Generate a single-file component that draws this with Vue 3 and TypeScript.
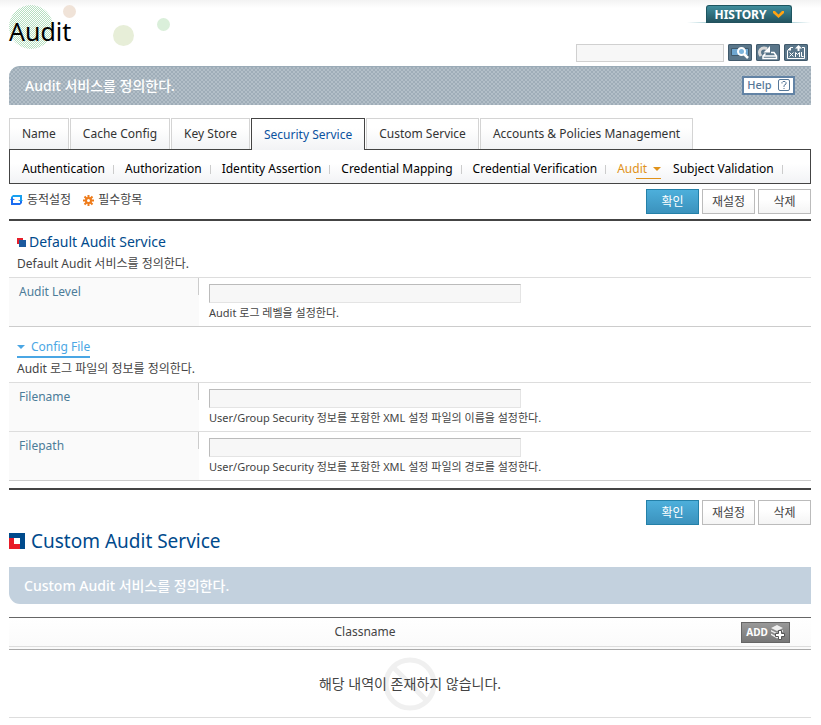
<script setup lang="ts">
import { ref } from 'vue'

interface Field { id: string; label: string; hint: string }

const tabs: string[] = ['Name', 'Cache Config', 'Key Store', 'Security Service', 'Custom Service', 'Accounts & Policies Management']
const activeTab = ref('Security Service')
const subTabs: string[] = ['Authentication', 'Authorization', 'Identity Assertion', 'Credential Mapping', 'Credential Verification', 'Audit', 'Subject Validation']
const activeSub = ref('Audit')

const levelFields: Field[] = [
  { id: 'audit-level', label: 'Audit Level', hint: 'Audit 로그 레벨을 설정한다.' },
]
const fileFields: Field[] = [
  { id: 'filename', label: 'Filename', hint: 'User/Group Security 정보를 포함한 XML 설정 파일의 이름을 설정한다.' },
  { id: 'filepath', label: 'Filepath', hint: 'User/Group Security 정보를 포함한 XML 설정 파일의 경로를 설정한다.' },
]
const values = ref<Record<string, string>>({ 'audit-level': '', filename: '', filepath: '' })
const query = ref('')
const actions: string[] = ['확인', '재설정', '삭제']
</script>

<template>
  <div class="page">
    <header class="top">
      <div class="title-area">
        <svg class="bubbles" width="180" height="52" viewBox="0 0 180 52" aria-hidden="true">
          <defs>
            <pattern id="dots" width="2" height="2" patternUnits="userSpaceOnUse">
              <rect width="1" height="1" fill="#b5dfc0" />
              <rect x="1" y="1" width="1" height="1" fill="#b5dfc0" />
            </pattern>
          </defs>
          <circle cx="22" cy="27" r="22" fill="url(#dots)" />
          <circle cx="60.500" cy="11.500" r="6.500" fill="#f0e3d8" />
          <circle cx="114.500" cy="35.500" r="10.500" fill="#e7eed8" />
          <circle cx="154.500" cy="24.500" r="6.500" fill="#daefda" />
        </svg>
        <h1>Audit</h1>
      </div>
      <div class="tools">
        <div class="history-bar">
          <button class="history" type="button">HISTORY
            <svg width="11" height="7" viewBox="0 0 11 7" aria-hidden="true"><path d="M0 0h2l3.500 3.500L9 0h2v2L5.500 7 0 2z" fill="#ffa312" /></svg>
          </button>
        </div>
        <form class="search" @submit.prevent>
          <input v-model="query" type="text" aria-label="Search">
          <button type="submit" class="tool search-button" aria-label="Search">
            <svg width="24" height="17" viewBox="0 0 24 17">
              <path d="M3.500 4.500h17v7h-17z" fill="#6ea6d0" stroke="#40596b" />
              <circle cx="13.500" cy="7.500" r="3.500" fill="#7db5dd" stroke="#fff" stroke-width="2" />
              <path d="M16 10l4 4" stroke="#fff" stroke-width="2.500" />
            </svg>
          </button>
          <button type="button" class="tool" aria-label="Reload">
            <svg width="24" height="17" viewBox="0 0 24 17" fill="none" stroke="#fff">
              <path d="M5 12C1.500 7 5 2.500 11 4.500" stroke="#d8d8d8" stroke-width="3" />
              <path d="M14 2v6.500H7.500z" fill="#fff" stroke="none" />
              <path d="M9.500 9.500L7 12v2.500h13.500V12L18 8.500h-3M7 12h13" stroke-width="1.500" />
            </svg>
          </button>
          <button type="button" class="tool" aria-label="Export XML">
            <svg width="24" height="17" viewBox="0 0 24 17" fill="none" stroke="#fff">
              <path d="M9 3.500H6.500L3.500 6.500v8h17v-11H18" />
              <path d="M4 6.500L7 3v3.500z" fill="#fff" stroke="none" />
              <path d="M14.500 3v4" stroke-width="2" />
              <path d="M11 4.500L14.500 1 18 4.500z" fill="#fff" stroke="none" />
              <path d="M5.500 8.500l4 4M9.500 8.500l-4 4M11.500 13V8.500l2 2 2-2V13M17.500 8v4.500h2" />
            </svg>
          </button>
        </form>
      </div>
    </header>

    <div class="banner">
      <p>Audit 서비스를 정의한다.</p>
      <button type="button" class="help">Help
        <svg width="12" height="12" viewBox="0 0 12 12" fill="none" stroke="#567797"><rect x=".5" y=".5" width="11" height="11" rx="1.500" /><path d="M4 4.500V3.500L5 2.500h2l1 1V5L6 6.500V8M6 9v1" /></svg>
      </button>
    </div>

    <nav class="tabs">
      <button v-for="t in tabs" :key="t" type="button" :class="{ active: t === activeTab }" @click="activeTab = t">{{ t }}</button>
    </nav>
    <nav class="subtabs">
      <a v-for="s in subTabs" :key="s" href="#" :class="{ active: s === activeSub }" @click.prevent="activeSub = s">{{ s }}</a>
    </nav>

    <div class="legend-row">
      <ul class="legend">
        <li>
          <svg width="13" height="12" viewBox="0 0 13 12"><path d="M1 5V3l2-2h9v5h1l-2 2-3-2h2V3H3v2z" fill="#18a0f0" /><path d="M12 7v2l-2 2H1V6H0l2-2 3 2H3v3h7V7z" fill="#1b6cf0" /></svg>
          동적설정
        </li>
        <li>
          <svg width="11" height="11" viewBox="0 0 11 11" fill="none" stroke="#ee7c1c" stroke-width="2"><circle cx="5.500" cy="5.500" r="2.500" /><path d="M5.500 0v3M5.500 8v3M0 5.500h3M8 5.500h3M1.500 1.500l2 2M7.500 7.500l2 2M1.500 9.500l2-2M7.500 3.500l2-2" /></svg>
          필수항목
        </li>
      </ul>
      <div class="actions"><button v-for="a in actions" :key="a" type="button">{{ a }}</button></div>
    </div>

    <main class="form">
      <section>
        <h2>
          <svg width="9" height="9" viewBox="0 0 9 9" aria-hidden="true"><path d="M0 0h6v6H0z" fill="#e61e2a" /><path d="M2 2h7v7H2z" fill="#1b5a9e" /></svg>
          Default Audit Service
        </h2>
        <p class="desc">Default Audit 서비스를 정의한다.</p>
        <div v-for="f in levelFields" :key="f.id" class="row">
          <label :for="f.id">{{ f.label }}</label>
          <div class="value">
            <input :id="f.id" v-model="values[f.id]" type="text">
            <p>{{ f.hint }}</p>
          </div>
        </div>
      </section>
      <section>
        <h3><a href="#" @click.prevent>Config File</a></h3>
        <p class="desc">Audit 로그 파일의 정보를 정의한다.</p>
        <div v-for="f in fileFields" :key="f.id" class="row">
          <label :for="f.id">{{ f.label }}</label>
          <div class="value">
            <input :id="f.id" v-model="values[f.id]" type="text">
            <p>{{ f.hint }}</p>
          </div>
        </div>
      </section>
    </main>
    <div class="actions bottom"><button v-for="a in actions" :key="a" type="button">{{ a }}</button></div>

    <h2 class="custom-title">
      <svg width="16" height="16" viewBox="0 0 16 16" aria-hidden="true"><path d="M0 0h16v16H0z" fill="#e81c28" /><path d="M0 0h16v16h-5V5H0z" fill="#004a8c" /><path d="M5 5h6v6H5z" fill="#fff" /></svg>
      Custom Audit Service
    </h2>
    <div class="custom-banner">Custom Audit 서비스를 정의한다.</div>
    <table>
      <thead>
        <tr>
          <th scope="col">Classname</th>
          <td class="add-cell">
            <button type="button" class="add">ADD
              <svg width="15" height="15" viewBox="0 0 15 15" aria-hidden="true"><path d="M7 0l6 3-6 3-6-3zM1 5l6 3 6-3v1.500L7 9.500 1 6.500zM1 8.500l6 3 2-1v2l-2 1-6-3.500z" fill="#eee" /><path d="M8.500 5.500h3v3h3v3h-3v3h-3v-3h-3v-3h3z" fill="#fff" stroke="#555" /></svg>
            </button>
          </td>
        </tr>
      </thead>
      <tbody>
        <tr>
          <td colspan="2" class="empty">
            <div class="empty-box">
              <svg width="54" height="54" viewBox="0 0 54 54" fill="none" stroke="#f0f0f0" stroke-width="5" aria-hidden="true"><circle cx="27" cy="27" r="24" /><path d="M10 10l34 34" /></svg>
              <span>해당 내역이 존재하지 않습니다.</span>
            </div>
          </td>
        </tr>
      </tbody>
    </table>
  </div>
</template>

<style>
body { margin: 0; background: #fff; }
</style>

<style scoped>
.page {
  padding: 0 10px 7px 9px;
  background: linear-gradient(#f3f3f3, #fff 8px);
  color: #444;
  font: 12px/18px "Noto Sans", "Noto Sans CJK KR", sans-serif;
}
.page *, .page *::before, .page *::after { box-sizing: border-box; }
h1, h2, h3, p, ul { margin: 0; padding: 0; }
button, input { font: inherit; margin: 0; }
button { display: flex; align-items: center; justify-content: center; padding: 0; cursor: pointer; }
a { color: inherit; text-decoration: none; }
svg { flex: none; }

.top { display: flex; justify-content: space-between; height: 66px; }
.title-area { display: grid; }
.title-area > * { grid-area: 1 / 1; }
h1 { padding-top: 13px; font-size: 25px; line-height: 36px; font-weight: 400; color: #000; }
.tools { display: flex; flex-direction: column; align-items: flex-end; padding-top: 5px; }
.history-bar {
  display: flex;
  justify-content: center;
  width: 124px;
  background: linear-gradient(90deg, #fff, #9cc8d0 20%, #9cc8d0 80%, #fff) bottom / 100% 1px no-repeat;
}
.history {
  gap: 6px;
  width: 86px;
  height: 18px;
  border: 1px solid #1d5560;
  border-width: 1px 1px 0;
  border-radius: 3px 3px 0 0;
  background: linear-gradient(#3f8d9c, #21505c);
  color: #fff;
  font-size: 12px;
  font-weight: 700;
}
.search { display: flex; gap: 4px; margin: 21px 3px 0 0; }
.search input { width: 148px; height: 18px; border: 1px solid #d0d0d0; background: #f7f7f7; }
.tool { width: 24px; height: 17px; border: 0; border-radius: 2px; background: #5a768a; box-shadow: inset 0 0 0 1px #40596b; }

.banner {
  display: flex;
  align-items: center;
  justify-content: space-between;
  height: 39px;
  padding: 0 16px;
  border-top: 1px solid #9aabb7;
  border-radius: 11px 0 0;
  background: repeating-conic-gradient(#9fadb8 0 25%, #b3bfc8 0 50%) 0 0 / 4px 4px;
  color: #fff;
  font-size: 14px;
  font-weight: 500;
}
.help { gap: 6px; width: 53px; height: 19px; margin-bottom: 2px; border: 2px solid #6283a5; background: #fff; color: #567797; font-size: 11px; }

.tabs { display: flex; gap: 1px; margin: 13px 0 -1px; }
.tabs button {
  position: relative;
  height: 31px;
  padding: 0 12px;
  border: 1px solid #d4d4d4;
  border-bottom: 0;
  background: linear-gradient(#fff 30%, #f2f3f5);
  color: #333;
  white-space: nowrap;
}
.tabs button.active { height: 32px; border-color: #444; color: #0b52a0; }
.subtabs {
  display: flex;
  align-items: center;
  height: 35px;
  padding: 5px 12px 0;
  border: 1px solid #444;
  background: linear-gradient(#fff 40%, #f2f3f5);
  color: #000;
  line-height: 20px;
}
.subtabs a { display: flex; align-items: center; white-space: nowrap; }
.subtabs a::after { content: ""; width: 1px; height: 9px; margin: 0 11px 0 8px; background: #ccc; }
.subtabs a.active { color: #e0921a; background: linear-gradient(#e0921a, #e0921a) 19px 100% / 25px 1px no-repeat; }
.subtabs a.active::after { width: 0; height: 0; margin: 0 12px 0 6px; border: 4px solid transparent; border-top-color: #e0921a; border-bottom: 0; background: none; }

.legend-row { display: flex; justify-content: space-between; align-items: flex-start; padding: 5px 0; }
.legend { display: flex; gap: 12px; padding-left: 1px; list-style: none; line-height: 22px; }
.legend li { display: flex; align-items: center; gap: 4px; }
.actions { display: flex; justify-content: flex-end; gap: 3px; }
.actions button { width: 53px; height: 25px; border: 1px solid #bbb; background: linear-gradient(#fff 40%, #f4f4f4); color: #444; }
.actions button:first-child { border-color: #2480a8; background: linear-gradient(#4dafdb, #3b92bd); color: #fff; }
.bottom { margin-top: 10px; }

.form { padding-bottom: 7px; border-top: 2px solid #444; border-bottom: 2px solid #444; }
.form h2 { display: flex; align-items: center; gap: 3px; padding: 11px 8px 1px; font-size: 14px; line-height: 20px; font-weight: 400; color: #004a8c; }
.desc { padding: 1px 8px 3px; line-height: 20px; }
.form h3 { display: flex; padding: 11px 8px 0; font-size: 12px; line-height: 18px; font-weight: 400; color: #4aa6e4; }
.form h3 a { display: flex; align-items: center; gap: 6px; border-bottom: 2px solid #4aa6e4; }
.form h3 a::before { content: ""; border: 4px solid transparent; border-top-color: #4aa6e4; border-bottom: 0; }
.row { display: grid; grid-template-columns: 190px 1fr; height: 49px; border-top: 1px solid #ddd; }
section .row:last-child { height: 50px; border-bottom: 1px solid #ccc; }
.row label { padding: 5px 10px; background: linear-gradient(#ccc, #ccc) 100% 0 / 1px 17px no-repeat #fafafa; color: #4c7c99; }
.value { padding: 6px 10px 0; }
.value input { display: block; width: 312px; height: 19px; border: 1px solid #e4e4e4; border-top-color: #bbb; border-left-color: #bbb; background: #f7f7f7; }
.value p { font-size: 11px; line-height: 20px; }

.custom-title { display: flex; align-items: center; gap: 6px; margin-top: 2px; font-size: 19px; line-height: 28px; font-weight: 400; color: #004a8c; }
.custom-banner { height: 37px; margin-top: 12px; padding: 0 15px; border-radius: 0 0 0 11px; background: #c3d1de; color: #fff; font-size: 14px; line-height: 37px; font-weight: 500; }
table { width: 100%; margin-top: 13px; border-collapse: separate; border-spacing: 0; border-top: 1px solid #666; }
thead th, thead td { height: 32px; padding: 0 0 3px; background: linear-gradient(#ddd, #ddd) 0 28px / 100% 1px no-repeat, linear-gradient(#fff, #fafafa); border-bottom: 1px solid #aaa; }
th { font-weight: 400; }
.add-cell { width: 90px; }
.add { gap: 2px; width: 49px; height: 21px; margin-left: 20px; border: 1px solid #666; background: linear-gradient(#999, #777); color: #fff; font-size: 10px; font-weight: 700; }
.empty { height: 68px; padding: 0; border-bottom: 1px solid #ddd; font-size: 14px; text-align: center; }
.empty-box { display: grid; place-items: center; }
.empty-box > * { grid-area: 1 / 1; }
</style>
